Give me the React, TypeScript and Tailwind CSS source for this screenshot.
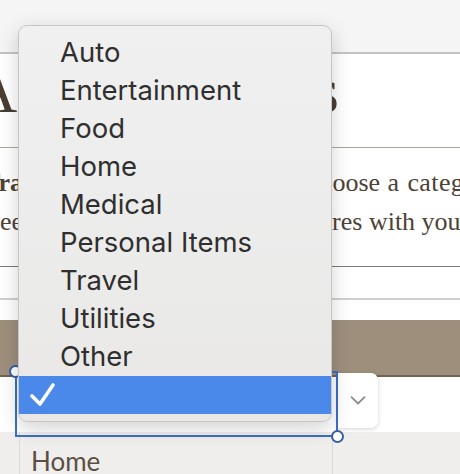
import React from 'react';

const categories = [
  'Auto',
  'Entertainment',
  'Food',
  'Home',
  'Medical',
  'Personal Items',
  'Travel',
  'Utilities',
  'Other',
];

const CheckMark: React.FC = () => (
  <svg width="26" height="26" viewBox="0 0 26 26" fill="none" className="absolute left-[10px] top-[6px]">
    <path d="M3 14 L11 22 L24 3" stroke="#ffffff" strokeWidth="3.6" strokeLinecap="round" strokeLinejoin="round" />
  </svg>
);

const Handle: React.FC<{ className: string }> = ({ className }) => (
  <span className={`absolute w-[13px] h-[13px] rounded-full bg-white border-2 border-[#3a5ea6] ${className}`} />
);

export default function App() {
  return (
    <div className="relative w-[460px] h-[474px] overflow-hidden bg-white">
      {/* Page behind the open select */}
      <header className="h-[54px] bg-[#f5f5f5] border-b-2 border-[#c3c3c3]" />

      <section className="h-[94px] pt-[5px] border-b border-[#aaa59f]">
        <h1 className="-ml-[29px] whitespace-nowrap text-[64px] leading-none text-[#4a3e33] font-['Liberation_Serif',serif]">
          Add Expenses
        </h1>
      </section>

      <section className="h-[119px] pt-[15px] border-b border-[#7f7973] font-['Liberation_Serif',serif] text-[26px] leading-[39px] text-[#4d4236] whitespace-nowrap">
        <p className="-ml-[17px] [word-spacing:1px]">
          <b>Track</b> your weekly spending. Choose <span className="tracking-[0.4px]">a category</span>
        </p>
        <p className="-ml-[14.5px]">Feel free to view how this compares with your</p>
      </section>

      <div className="h-[33px] border-b-2 border-[#d0d0d0]" />
      <div className="h-[20px]" />

      <div className="h-[57px] bg-[#9e8f7d] border-b-2 border-[#6f6353]" />

      {/* Select row */}
      <div className="h-[55px] flex pl-[16px]">
        <div className="w-[322px] h-full bg-white" />
        <button className="w-[40px] h-[55px] -mt-[4px] flex items-center justify-center bg-white rounded-r-[7px] shadow-[0_1px_4px_rgba(0,0,0,0.18)]">
          <svg width="16" height="9" viewBox="0 0 16 9" fill="none">
            <path d="M1.5 1.2 L8 7.5 L14.5 1.2" stroke="#8c8c8c" strokeWidth="1.8" strokeLinecap="round" strokeLinejoin="round" />
          </svg>
        </button>
      </div>

      {/* Table row below */}
      <div className="h-[42px] flex bg-[#efeeec]">
        <div className="w-[20px] border-r border-[#dcdad6]" />
        <div className="w-[313px] border-r border-[#dcdad6] pl-[11px] pt-[16px]">
          <span className="block text-[26px] leading-[26px] text-[#5b4f43] font-['Lato',sans-serif]">Home</span>
        </div>
      </div>

      {/* Selection outline of the select */}
      <div className="absolute left-[15px] top-[371px] w-[323px] h-[66px] border-2 border-[#3d6fc2]" />
      <Handle className="left-[9px] top-[365px]" />
      <Handle className="left-[331px] top-[430px]" />

      {/* Open option list */}
      <div className="absolute left-[18px] top-[25px] w-[314px] h-[397px] py-[8px] rounded-[9px] border border-[#c6c6c6] bg-gradient-to-b from-[#f0f0f0] to-[#e9e8e7] shadow-[0_6px_20px_rgba(0,0,0,0.18)] overflow-hidden font-['Inter',sans-serif]">
        {categories.map((c) => (
          <div key={c} className="h-[38px] flex items-center pl-[41px] text-[27.5px] leading-none text-[#2f2f2f]">
            {c}
          </div>
        ))}
        <div className="relative h-[38px] bg-[#4a88ea]">
          <CheckMark />
        </div>
      </div>
    </div>
  );
}
